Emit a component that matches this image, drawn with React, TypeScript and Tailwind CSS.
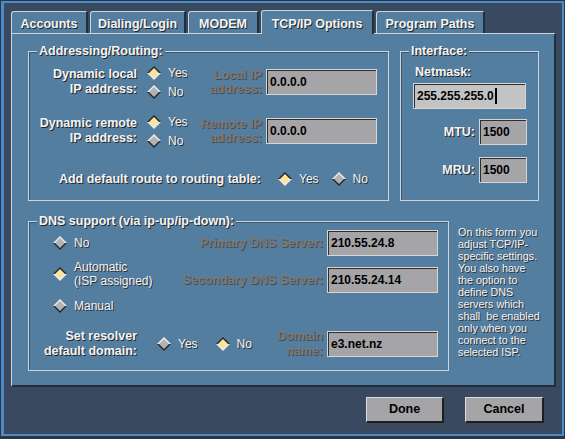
import React from "react";

const LBL = "font-bold text-[12.5px] text-[#f4f4f4] [text-shadow:1px_1px_0_#262626]";
const DIS = "font-bold text-[12.5px] text-[#7a7a7a] [text-shadow:1px_1px_0_#4a4a4a] whitespace-nowrap";
const REG = "text-[12px] text-[#f4f4f4] [text-shadow:1px_1px_0_#2e2e2e]";

function Diamond({ on }: { on?: boolean }) {
  const top = on ? "#262626" : "#ececec";
  const bot = on ? "#ececec" : "#262626";
  const fill = on ? "#fde49c" : "#b2b2b2";
  return (
    <svg width="14" height="14" viewBox="0 0 14 14" className="shrink-0">
      <polygon points="0,7 7,0 14,7" fill={top} />
      <polygon points="0,7 7,14 14,7" fill={bot} />
      <polygon points="2,7 7,2 12,7 7,12" fill={fill} />
    </svg>
  );
}

function Radio({ on, children, className = "" }: { on?: boolean; children: React.ReactNode; className?: string }) {
  return (
    <div className={"flex items-center gap-[7px] " + className}>
      <Diamond on={on} />
      <span className={REG + " leading-[14px]"}>{children}</span>
    </div>
  );
}

function Field({ value, w, focus }: { value: string; w: string; focus?: boolean }) {
  return (
    <div
      className={
        "h-[26px] shrink-0 border border-[#d6d6d6] shadow-[inset_1px_1px_0_#2e2e2e] flex items-center pl-[3px] font-bold text-[12px] text-black " +
        w +
        (focus ? " bg-[#c3c3c3]" : " bg-[#a5a4a7]")
      }
    >
      <span>{value}</span>
      {focus && <span className="ml-[1px] w-[2px] h-[16px] bg-black" />}
    </div>
  );
}

function Group({ title, className, children }: { title: string; className: string; children: React.ReactNode }) {
  return (
    <div className={"relative border border-[#cdd4da] shadow-[inset_1px_1px_0_#3d566d] " + className}>
      <span className={"absolute left-[8px] -top-[8px] px-[2px] bg-[#547ea0] leading-[14px] " + LBL}>{title}</span>
      {children}
    </div>
  );
}

function Tab({ label, w, active }: { label: string; w: string; active?: boolean }) {
  return (
    <div
      className={
        "flex items-center justify-center pt-[3px] border-t border-l border-r-2 border-t-[#cdd4da] border-l-[#cdd4da] border-r-[#22303e] rounded-tl-[3px] bg-[#547ea0] " +
        w +
        (active ? " h-[24px] -mb-[1px] relative z-10" : " h-[22px]")
      }
    >
      <span className={LBL}>{label}</span>
    </div>
  );
}

function Button({ label, w }: { label: string; w: string }) {
  return (
    <div
      className={
        "h-[26px] flex items-center justify-center bg-[#a5a4a7] border-t border-l border-r-2 border-b-2 border-t-[#dcdcdc] border-l-[#dcdcdc] border-r-[#1e1e1e] border-b-[#1e1e1e] font-bold text-[12.5px] text-black " +
        w
      }
    >
      {label}
    </div>
  );
}

const help = [
  "On this form you",
  "adjust TCP/IP-",
  "specific settings.",
  "You also have",
  "the option to",
  "define DNS",
  "servers which",
  "shall  be enabled",
  "only when you",
  "connect to the",
  "selected ISP.",
];

function IpRow({ l1, l2, d1, d2, className = "" }: { l1: string; l2: string; d1: string; d2: string; className?: string }) {
  return (
    <div className={"flex items-center h-[38px] pr-[11px] " + className}>
      <div className={"w-[108px] shrink-0 text-right leading-[15px] " + LBL}>
        {l1}
        <br />
        {l2}
      </div>
      <div className="ml-[10px] w-[46px] shrink-0 flex flex-col">
        <Radio on className="h-[19px]">Yes</Radio>
        <Radio className="h-[19px]">No</Radio>
      </div>
      <div className={"flex-1 text-right leading-[14px] " + DIS}>
        {d1}
        <br />
        {d2}
      </div>
      <div className="ml-[4px]">
        <Field value="0.0.0.0" w="w-[111px]" />
      </div>
    </div>
  );
}

export default function App() {
  return (
    <div
      className="w-[565px] h-[439px] bg-[#2a3646] pt-[1px] pl-[1px] pr-[1px] pb-[3px]"
      style={{ fontFamily: '"Liberation Sans", Arial, sans-serif' }}
    >
      <div className="h-full flex flex-col border-t-2 border-l-[3px] border-r-2 border-b-2 border-[#4c8bc8] bg-[#39495f] pt-[8px] pl-[7px] pr-[6px]">
        {/* tabs */}
        <div className="flex items-end gap-[2px] h-[22px]">
          <Tab label="Accounts" w="w-[77px]" />
          <Tab label="Dialing/Login" w="w-[96px]" />
          <Tab label="MODEM" w="w-[71px]" />
          <Tab label="TCP/IP Options" w="w-[113px]" active />
          <Tab label="Program Paths" w="w-[109px]" />
        </div>

        {/* panel */}
        <div className="h-[354px] flex flex-col bg-[#547ea0] border-t border-l border-r-2 border-b-2 border-t-[#cdd4da] border-l-[#cdd4da] border-r-[#22303e] border-b-[#22303e] pt-[17px] pl-[16px]">
          <div className="flex gap-[11px]">
            <Group title="Addressing/Routing:" className="w-[361px] h-[150px]">
              <div className="flex flex-col pt-[11px]">
                <IpRow l1="Dynamic local" l2="IP address:" d1="Local IP" d2="address:" />
                <IpRow l1="Dynamic remote" l2="IP address:" d1="Remote IP" d2="address:" className="mt-[11px]" />
                <div className="flex items-center h-[20px] mt-[19px]">
                  <div className={"w-[232px] text-right whitespace-nowrap " + LBL}>Add default route to routing table:</div>
                  <Radio on className="ml-[17px]">Yes</Radio>
                  <Radio className="ml-[13px]">No</Radio>
                </div>
              </div>
            </Group>

            <Group title="Interface:" className="w-[139px] h-[150px]">
              <div className="flex flex-col pt-[13px] pl-[12px] pr-[11px]">
                <div className={"pl-[2px] leading-[14px] " + LBL}>Netmask:</div>
                <div className="mt-[4px]">
                  <Field value="255.255.255.0" w="w-[113px]" focus />
                </div>
                <div className="flex items-center justify-end gap-[4px] mt-[10px]">
                  <span className={LBL}>MTU:</span>
                  <Field value="1500" w="w-[48px]" />
                </div>
                <div className="flex items-center justify-end gap-[4px] mt-[12px]">
                  <span className={LBL}>MRU:</span>
                  <Field value="1500" w="w-[48px]" />
                </div>
              </div>
            </Group>
          </div>

          <div className="flex mt-[20px]">
            <Group title="DNS support (via ip-up/ip-down):" className="w-[421px] h-[150px]">
              <div className="flex flex-col pt-[8px]">
                <div className="flex">
                  <div className="flex flex-col pl-[24px] pt-[3px]">
                    <Radio className="h-[20px]">No</Radio>
                    <Radio on className="h-[30px] mt-[6px]">
                      Automatic
                      <br />
                      (ISP assigned)
                    </Radio>
                    <Radio className="h-[20px] mt-[7px]">Manual</Radio>
                  </div>
                  <div className="ml-auto pr-[10px] flex flex-col">
                    <div className="flex items-center justify-end gap-[4px]">
                      <span className={DIS}>Primary DNS Server:</span>
                      <Field value="210.55.24.8" w="w-[111px]" />
                    </div>
                    <div className="flex items-center justify-end gap-[4px] mt-[11px]">
                      <span className={DIS}>Secondary DNS Server:</span>
                      <Field value="210.55.24.14" w="w-[111px]" />
                    </div>
                  </div>
                </div>
                <div className="flex items-center h-[26px] mt-[15px] pr-[10px]">
                  <div className={"w-[108px] text-right leading-[15px] whitespace-nowrap " + LBL}>
                    Set resolver
                    <br />
                    default domain:
                  </div>
                  <Radio className="ml-[20px]">Yes</Radio>
                  <Radio on className="ml-[18px]">No</Radio>
                  <div className={"ml-auto text-right leading-[15px] " + DIS}>
                    Domain
                    <br />
                    name:
                  </div>
                  <div className="ml-[4px]">
                    <Field value="e3.net.nz" w="w-[111px]" />
                  </div>
                </div>
              </div>
            </Group>
            <div className="ml-[9px] mt-[5px] flex flex-col whitespace-pre text-[10.8px] leading-[12px] text-[#f4f4f4] [text-shadow:1px_1px_0_#2e2e2e]">
              {help.map((l) => (
                <span key={l}>{l}</span>
              ))}
            </div>
          </div>
        </div>

        {/* buttons */}
        <div className="flex justify-end gap-[21px] mt-[10px] pr-[12px]">
          <Button label="Done" w="w-[78px]" />
          <Button label="Cancel" w="w-[79px]" />
        </div>
      </div>
    </div>
  );
}
